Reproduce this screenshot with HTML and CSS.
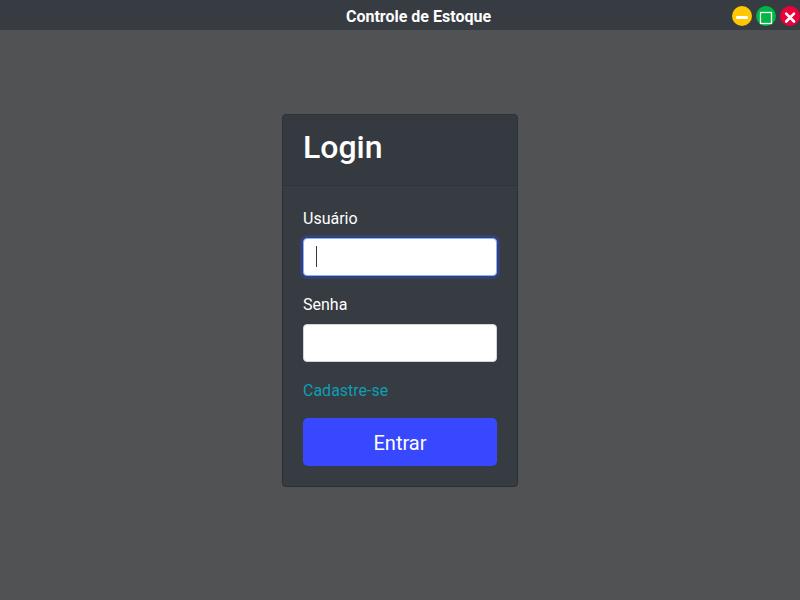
FILE: index.html
```html
<!DOCTYPE html>
<html lang="pt-BR">
<head>
<meta charset="utf-8">
<title>Controle de Estoque</title>
<link rel="stylesheet" href="styles.css">
</head>
<body>
<header class="titlebar">
  <span class="title">Controle de Estoque</span>
  <div class="controls">
    <button class="control minimize" aria-label="Minimizar"><svg viewBox="0 0 20 20"><rect x="4" y="10" width="12" height="3" rx="1" fill="#fff"/></svg></button>
    <button class="control maximize" aria-label="Maximizar"><svg viewBox="0 0 20 20"><rect x="4.5" y="6.5" width="11" height="11" fill="none" stroke="#fff" stroke-width="1.3"/></svg></button>
    <button class="control close" aria-label="Fechar"><svg viewBox="0 0 20 20"><path d="M6.2 7.7l7.8 7.8M14 7.7l-7.8 7.8" stroke="#fff" stroke-width="2.6" stroke-linecap="round"/></svg></button>
  </div>
</header>
<main class="content">
  <form class="card">
    <div class="card-header"><h2>Login</h2></div>
    <div class="card-body">
      <div class="group"><label>Usuário</label><div class="field focused"><span class="caret"></span></div></div>
      <div class="group"><label>Senha</label><div class="field"></div></div>
      <a class="signup">Cadastre-se</a>
      <button type="button" class="submit">Entrar</button>
    </div>
  </form>
</main>
</body>
</html>
```

FILE: styles.css
```css
* { box-sizing: border-box; }
body {
  margin: 0;
  height: 100vh;
  display: flex;
  flex-direction: column;
  overflow: hidden;
  background: #515254;
  color: #fff;
  font: 16px/24px Roboto, sans-serif;
}
.titlebar {
  flex: none;
  height: 30px;
  display: flex;
  align-items: center;
  padding-top: 2px;
  background: #373b42;
}
.title {
  flex: 1;
  padding: 2px 0 0 105px;
  text-align: center;
  font-weight: 700;
}
.controls { display: flex; gap: 4px; }
.control {
  width: 20px;
  height: 20px;
  padding: 0;
  border: 0;
  border-radius: 50%;
}
.control svg { display: block; width: 20px; height: 20px; }
.minimize { background: #ffc800; }
.maximize { background: #00b543; }
.close { background: #eb003b; }
.content { flex: 1; display: flex; justify-content: center; align-items: flex-start; padding-top: 84px; }
.card {
  width: 236px;
  height: 373px;
  border: 1px solid #2d3035;
  border-radius: 4px;
  background: #373b42;
}
.card-header {
  height: 71px;
  padding: 12px 20px;
  border-bottom: 1px solid #303339;
  background: #353940;
  border-radius: 3px 3px 0 0;
}
h2 { margin: 0; font-size: 32px; line-height: 41px; font-weight: 500; }
.card-body { padding: 21px 20px 20px; }
.group { margin-bottom: 17px; }
label { display: block; margin-bottom: 7px; }
.field {
  height: 38px;
  padding: 7px 12px;
  border: 1px solid #ced4da;
  border-radius: 4px;
  background: #fff;
}
.focused { border-color: #80b4ff; box-shadow: 0 0 0 3px #373f76; }
.caret { display: block; width: 1px; height: 21px; background: #343a40; }
.signup { display: block; margin-bottom: 15px; color: #0d9fb4; }
.submit {
  display: block;
  width: 100%;
  height: 48px;
  padding: 2px 0 0;
  border: 0;
  border-radius: 5px;
  background: #3848ff;
  color: #fff;
  font: 20px/30px Roboto, sans-serif;
}
```
